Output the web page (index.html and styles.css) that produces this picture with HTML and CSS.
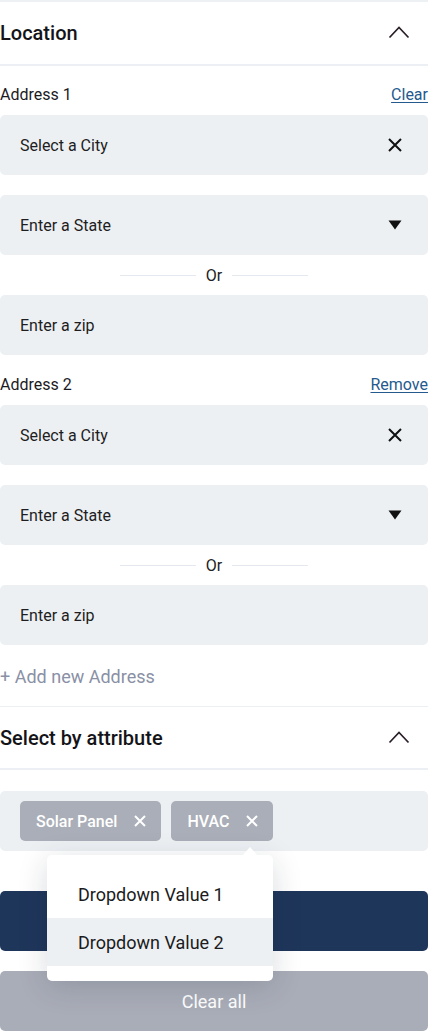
FILE: index.html
```html
<!DOCTYPE html>
<html>
<head>
<meta charset="utf-8">
<link rel="stylesheet" href="styles.css">
</head>
<body>
<div class="panel">
  <div class="section-head top">
    <span class="section-title">Location</span>
    <svg class="chev" width="22" height="14" viewBox="0 0 22 14"><path d="M1.5 12.5 L11 2.5 L20.5 12.5" fill="none" stroke="#2a1f28" stroke-width="1.7"/></svg>
  </div>
  <div class="location">
    <div class="address">
      <div class="label-row"><span>Address 1</span><a class="link">Clear</a></div>
      <div class="field"><span>Select a City</span>
        <svg width="14" height="14" viewBox="0 0 14 14"><path d="M1 1 L13 13 M13 1 L1 13" stroke="#111" stroke-width="2"/></svg>
      </div>
      <div class="field gap"><span>Enter a State</span>
        <svg width="14" height="10" viewBox="0 0 14 10"><path d="M0.5 0.5 H13.5 L7 9.5 Z" fill="#111"/></svg>
      </div>
      <div class="or"><span class="line"></span><span>Or</span><span class="line"></span></div>
      <div class="field"><span>Enter a zip</span></div>
    </div>
    <div class="address second">
      <div class="label-row"><span>Address 2</span><a class="link">Remove</a></div>
      <div class="field"><span>Select a City</span>
        <svg width="14" height="14" viewBox="0 0 14 14"><path d="M1 1 L13 13 M13 1 L1 13" stroke="#111" stroke-width="2"/></svg>
      </div>
      <div class="field gap"><span>Enter a State</span>
        <svg width="14" height="10" viewBox="0 0 14 10"><path d="M0.5 0.5 H13.5 L7 9.5 Z" fill="#111"/></svg>
      </div>
      <div class="or"><span class="line"></span><span>Or</span><span class="line"></span></div>
      <div class="field"><span>Enter a zip</span></div>
    </div>
    <div class="add">+ Add new Address</div>
  </div>
  <div class="section-head second">
    <span class="section-title">Select by attribute</span>
    <svg class="chev" width="22" height="14" viewBox="0 0 22 14"><path d="M1.5 12.5 L11 2.5 L20.5 12.5" fill="none" stroke="#2a1f28" stroke-width="1.7"/></svg>
  </div>
  <div class="attrs">
    <div class="tags">
      <div class="chip"><span>Solar Panel</span>
        <svg width="12" height="12" viewBox="0 0 12 12"><path d="M1 1 L11 11 M11 1 L1 11" stroke="#fff" stroke-width="2"/></svg>
      </div>
      <div class="chip"><span>HVAC</span>
        <svg width="12" height="12" viewBox="0 0 12 12"><path d="M1 1 L11 11 M11 1 L1 11" stroke="#fff" stroke-width="2"/></svg>
      </div>
    </div>
    <div class="btn primary"></div>
    <div class="btn secondary">Clear all</div>
    <div class="dropdown">
      <div class="item">Dropdown Value 1</div>
      <div class="item active">Dropdown Value 2</div>
    </div>
  </div>
</div>
</body>
</html>
```
FILE: styles.css
```css
* { box-sizing: border-box; }
body {
  margin: 0;
  background: #fff;
  font-family: Roboto, "Liberation Sans", sans-serif;
  color: #1b1b1f;
}
.panel {
  width: 428px;
  border-top: 2px solid #eef1f4;
}
.section-head {
  height: 64px;
  display: flex;
  align-items: center;
  justify-content: space-between;
  padding-right: 18px;
  border-bottom: 2px solid #eceff3;
}
.section-head.second {
  border-top: 1px solid #eceff3;
  height: 64px;
}
.section-title {
  font-size: 20px;
  font-weight: 500;
  color: #141418;
}
.chev { margin-top: -2px; }
.location { padding-top: 18px; }
.address.second { margin-top: 19px; }
.label-row {
  height: 20px;
  display: flex;
  align-items: center;
  justify-content: space-between;
  font-size: 16px;
  margin-bottom: 11px;
}
.link {
  color: #245a8d;
  text-decoration: underline;
  text-underline-offset: 2px;
}
.field {
  height: 60px;
  background: #edf0f3;
  border-radius: 5px;
  display: flex;
  align-items: center;
  justify-content: space-between;
  padding: 0 26px 0 20px;
  font-size: 16px;
  color: #1d1d22;
}
.field.gap { margin-top: 20px; }
.or {
  height: 40px;
  display: flex;
  align-items: center;
  justify-content: center;
  gap: 10px;
  font-size: 16px;
  color: #222;
}
.or .line {
  width: 76px;
  height: 1px;
  background: #e4e9ef;
}
.add {
  height: 61px;
  display: flex;
  align-items: center;
  font-size: 18px;
  color: #8a90a5;
  padding-top: 1px;
}
.attrs {
  position: relative;
  padding-top: 21px;
}
.tags {
  height: 60px;
  background: #edf0f3;
  border-radius: 5px;
  display: flex;
  align-items: center;
  gap: 10px;
  padding-left: 20px;
}
.chip {
  height: 40px;
  background: #aaaeb8;
  border-radius: 5px;
  display: flex;
  align-items: center;
  gap: 17px;
  padding: 0 15px 0 16px;
  color: #fff;
  font-size: 16px;
  font-weight: 500;
}
.btn {
  height: 60px;
  border-radius: 5px;
  display: flex;
  align-items: center;
  justify-content: center;
  color: #fff;
  font-size: 18px;
}
.btn.primary {
  margin-top: 40px;
  background: #1f365b;
}
.btn.secondary {
  margin-top: 20px;
  background: #a9adb8;
}
.dropdown {
  position: absolute;
  left: 47px;
  top: 85px;
  width: 226px;
  padding: 15px 0;
  background: #fff;
  border-radius: 5px;
  box-shadow: 0 6px 30px rgba(20, 30, 50, 0.16);
}
.dropdown::before {
  content: "";
  position: absolute;
  top: -8px;
  left: 196px;
  border-left: 7px solid transparent;
  border-right: 7px solid transparent;
  border-bottom: 8px solid #fff;
}
.item {
  height: 48px;
  display: flex;
  align-items: center;
  padding-left: 31px;
  font-size: 18px;
  color: #1b1b20;
}
.item.active { background: #edf0f3; }
```
